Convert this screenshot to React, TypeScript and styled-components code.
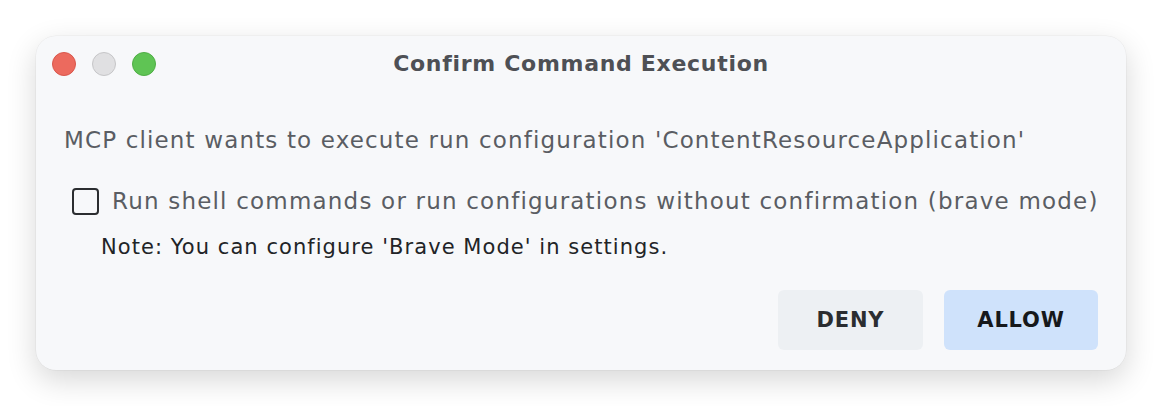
import React, {useState} from "react";
import styled, {createGlobalStyle} from "styled-components";

const GlobalStyle = createGlobalStyle`
  html, body {
    margin: 0;
    padding: 0;
    background: #ffffff;
  }
`;

const Page = styled.div`
  width: 1162px;
  height: 406px;
  box-sizing: border-box;
  padding: 36px;
`;

const Window = styled.div`
  width: 1090px;
  height: 334px;
  box-sizing: border-box;
  background: #f7f8fa;
  border-radius: 20px;
  box-shadow: 0 10px 30px rgba(0, 0, 0, 0.16), 0 0 0 0.5px rgba(0, 0, 0, 0.06);
  display: flex;
  flex-direction: column;
`;

const TitleBar = styled.div`
  height: 55px;
  display: grid;
  grid-template-columns: 1fr auto 1fr;
  align-items: center;
  padding: 0 16px;
`;

const Lights = styled.div`
  display: flex;
  gap: 16px;
  padding-top: 1px;
`;

const Light = styled.span<{ color: string; edge: string }>`
  width: 24px;
  height: 24px;
  border-radius: 50%;
  box-sizing: border-box;
  background: ${props => props.color};
  border: 1px solid ${props => props.edge};
`;

const Title = styled.div`
  font-family: "DejaVu Sans", sans-serif;
  font-weight: 700;
  font-size: 22px;
  letter-spacing: 0.7px;
  color: #4e5055;
`;

const Body = styled.div`
  flex: 1;
  display: flex;
  flex-direction: column;
  padding: 34px 28px 20px 28px;
  font-family: "DejaVu Sans", sans-serif;
`;

const Message = styled.div`
  font-size: 23px;
  letter-spacing: 1.15px;
  color: #5a5d63;
  line-height: 30px;
  white-space: nowrap;
`;

const CheckRow = styled.label`
  display: flex;
  align-items: center;
  gap: 13px;
  margin-top: 31px;
  margin-left: 8px;
  font-size: 23px;
  letter-spacing: 1.2px;
  color: #5a5d63;
  line-height: 30px;
  white-space: nowrap;
`;

const Box = styled.span`
  width: 27px;
  height: 27px;
  box-sizing: border-box;
  border: 2.5px solid #2b2d30;
  border-radius: 4px;
  flex-shrink: 0;
`;

const Note = styled.div`
  margin-top: 17px;
  margin-left: 37px;
  font-size: 21px;
  letter-spacing: 1.05px;
  color: #222427;
  line-height: 28px;
  white-space: nowrap;
`;

const Actions = styled.div`
  margin-top: auto;
  display: flex;
  justify-content: flex-end;
  gap: 21px;
`;

const Button = styled.button<{ primary?: boolean }>`
  height: 60px;
  width: ${props => props.primary ? "154px" : "145px"};
  border: none;
  border-radius: 6px;
  background: ${props => props.primary ? "#cfe2fb" : "#edf0f3"};
  color: ${props => props.primary ? "#16181b" : "#2b2d30"};
  font-family: "DejaVu Sans", sans-serif;
  font-weight: 700;
  font-size: 21px;
  letter-spacing: 0.8px;
`;

export default function App() {
    const [brave, setBrave] = useState(false);
    return <Page>
        <GlobalStyle/>
        <Window>
            <TitleBar>
                <Lights>
                    <Light color="#ec6a5e" edge="#d9574c"/>
                    <Light color="#e0e0e2" edge="#c6c6c8"/>
                    <Light color="#5fc454" edge="#4fae45"/>
                </Lights>
                <Title>Confirm Command Execution</Title>
                <div/>
            </TitleBar>
            <Body>
                <Message>MCP client wants to execute run configuration 'ContentResourceApplication'</Message>
                <CheckRow onClick={() => setBrave(!brave)}>
                    <Box/>
                    Run shell commands or run configurations without confirmation (brave mode)
                </CheckRow>
                <Note>Note: You can configure 'Brave Mode' in settings.</Note>
                <Actions>
                    <Button>DENY</Button>
                    <Button primary>ALLOW</Button>
                </Actions>
            </Body>
        </Window>
    </Page>;
}
